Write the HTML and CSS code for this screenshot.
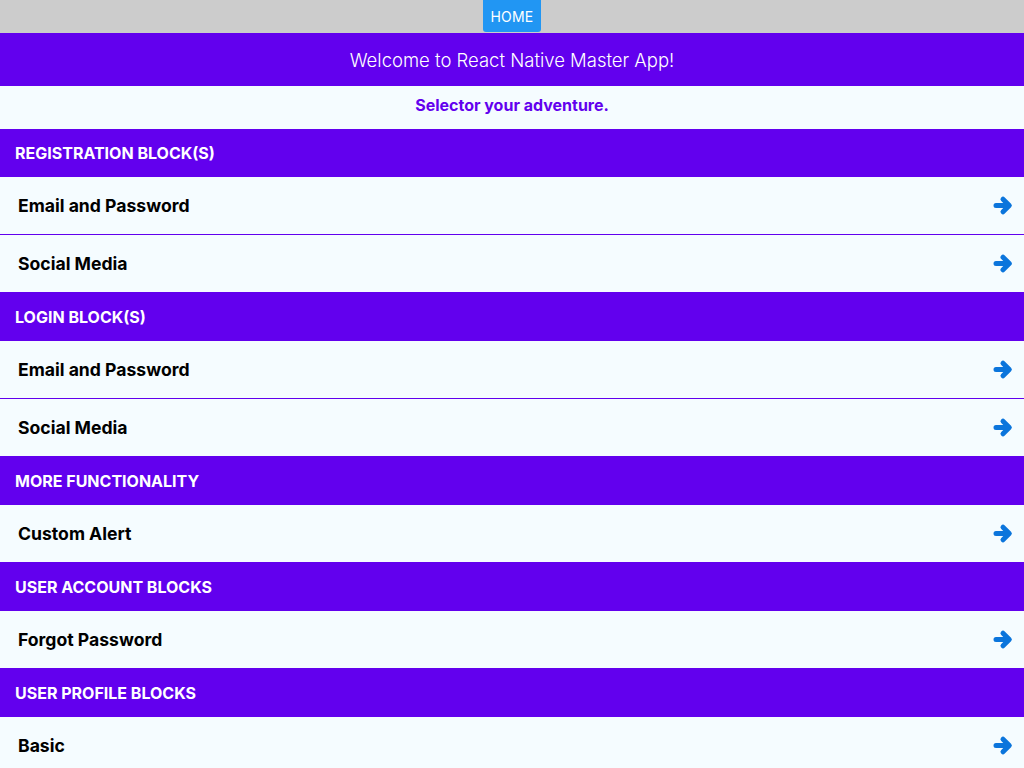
FILE: index.html
```html
<!DOCTYPE html>
<html>
<head>
<meta charset="utf-8">
<link rel="stylesheet" href="styles.css">
</head>
<body>
<div class="topbar"><button class="home">HOME</button></div>
<header class="header">Welcome to React Native Master App!</header>
<div class="subtitle">Selector your adventure.</div>

<div class="section first">REGISTRATION BLOCK(S)</div>
<div class="row sep"><span>Email and Password</span><svg class="arrow" viewBox="0 0 20 21"><path d="M3 10.5H14.5M10 4.2L16.3 10.5L10 16.8"/></svg></div>
<div class="row"><span>Social Media</span><svg class="arrow" viewBox="0 0 20 21"><path d="M3 10.5H14.5M10 4.2L16.3 10.5L10 16.8"/></svg></div>

<div class="section">LOGIN BLOCK(S)</div>
<div class="row sep"><span>Email and Password</span><svg class="arrow" viewBox="0 0 20 21"><path d="M3 10.5H14.5M10 4.2L16.3 10.5L10 16.8"/></svg></div>
<div class="row"><span>Social Media</span><svg class="arrow" viewBox="0 0 20 21"><path d="M3 10.5H14.5M10 4.2L16.3 10.5L10 16.8"/></svg></div>

<div class="section">MORE FUNCTIONALITY</div>
<div class="row"><span>Custom Alert</span><svg class="arrow" viewBox="0 0 20 21"><path d="M3 10.5H14.5M10 4.2L16.3 10.5L10 16.8"/></svg></div>

<div class="section">USER ACCOUNT BLOCKS</div>
<div class="row"><span>Forgot Password</span><svg class="arrow" viewBox="0 0 20 21"><path d="M3 10.5H14.5M10 4.2L16.3 10.5L10 16.8"/></svg></div>

<div class="section">USER PROFILE BLOCKS</div>
<div class="row"><span>Basic</span><svg class="arrow" viewBox="0 0 20 21"><path d="M3 10.5H14.5M10 4.2L16.3 10.5L10 16.8"/></svg></div>
</body>
</html>
```

FILE: styles.css
```css
html, body {
  margin: 0;
  padding: 0;
  background: #f5fcff;
  font-family: Inter, "Noto Sans", sans-serif;
  overflow: hidden;
}
.topbar {
  height: 33px;
  background: #cccccc;
  display: flex;
  justify-content: center;
  align-items: flex-start;
}
.home {
  height: 32px;
  width: 58px;
  margin: 0;
  padding: 0;
  border: none;
  border-radius: 0 0 3px 3px;
  background: #2196f3;
  color: #ffffff;
  font-family: Inter, sans-serif;
  font-size: 14px;
  letter-spacing: 0.2px;
}
.header {
  height: 53px;
  background: #6200ee;
  color: #ffffff;
  font-size: 18.5px;
  font-weight: 300;
  display: flex;
  align-items: center;
  justify-content: center;
}
.subtitle {
  height: 38px;
  padding-bottom: 5px;
  color: #6200ee;
  font-size: 16px;
  font-weight: 700;
  display: flex;
  align-items: center;
  justify-content: center;
}
.section {
  height: 49px;
  background: #6200ee;
  color: #ffffff;
  font-size: 16px;
  font-weight: 700;
  padding-left: 15px;
  display: flex;
  align-items: center;
}
.section.first {
  height: 48px;
}
.row {
  height: 57px;
  padding: 0 11px 0 18px;
  display: flex;
  align-items: center;
  justify-content: space-between;
  color: #000000;
  font-size: 17.6px;
  font-weight: 700;
}
.row.sep {
  border-bottom: 1px solid #6200ee;
}
.arrow {
  width: 20px;
  height: 21px;
  fill: none;
  stroke: #0b75dc;
  stroke-width: 5;
  stroke-linecap: round;
  stroke-linejoin: round;
}
```
